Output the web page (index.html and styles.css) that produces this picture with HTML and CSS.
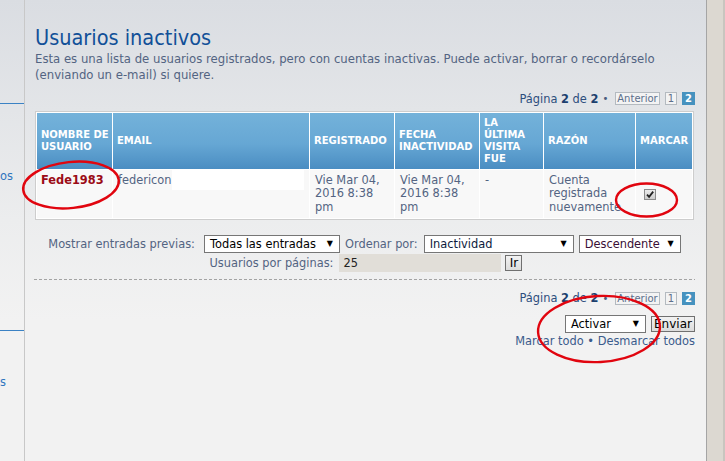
FILE: index.html
```html
<!DOCTYPE html>
<html lang="es">
<head>
<meta charset="utf-8">
<title>Usuarios inactivos</title>
<link rel="stylesheet" href="styles.css">
</head>
<body>
<div class="page">
  <aside class="side">
    <div class="side-rule side-rule-1"></div>
    <a class="side-link side-link-1">os</a>
    <div class="side-rule side-rule-2"></div>
    <a class="side-link side-link-2">s</a>
  </aside>
  <main class="main">
    <h1 class="title">Usuarios inactivos</h1>
    <p class="desc">Esta es una lista de usuarios registrados, pero con cuentas inactivas. Puede activar, borrar o recordárselo<br>(enviando un e-mail) si quiere.</p>
    <div class="pagination pagination-top">
      <span class="pag-label">Página <strong>2</strong> de <strong>2</strong></span>
      <span class="pag-bullet">•</span>
      <span class="pag-btn pag-prev">Anterior</span>
      <span class="pag-btn">1</span>
      <span class="pag-btn pag-current">2</span>
    </div>
    <table class="users">
      <colgroup>
        <col class="c-name"><col class="c-email"><col class="c-reg"><col class="c-inact"><col class="c-visit"><col class="c-reason"><col class="c-mark">
      </colgroup>
      <thead>
        <tr>
          <th>Nombre de usuario</th>
          <th>Email</th>
          <th>Registrado</th>
          <th>Fecha inactividad</th>
          <th>La última visita fue</th>
          <th>Razón</th>
          <th>Marcar</th>
        </tr>
      </thead>
      <tbody>
        <tr>
          <td class="cell-name"><span class="username">Fede1983</span></td>
          <td class="cell-email"><div class="email-wrap"><span class="email-text">federicon</span><span class="email-blank"></span></div></td>
          <td>Vie Mar 04, 2016 8:38 pm</td>
          <td>Vie Mar 04, 2016 8:38 pm</td>
          <td>-</td>
          <td>Cuenta registrada nuevamente</td>
          <td class="cell-mark"><span class="checkbox"><svg class="check" viewBox="0 0 10 9" width="10" height="9"><path d="M2 4.6 L4.1 6.8 L8.2 1.6" /></svg></span></td>
        </tr>
      </tbody>
    </table>
    <div class="options">
      <div class="opt-row">
        <span class="opt-label">Mostrar entradas previas:</span>
        <span class="select w-entries gap-9"><span>Todas las entradas</span><span class="arrow">▼</span></span>
        <span class="opt-label gap-5">Ordenar por:</span>
        <span class="select w-order gap-6 txt-navy"><span>Inactividad</span><span class="arrow">▼</span></span>
        <span class="select w-dir gap-5 txt-plum"><span>Descendente</span><span class="arrow">▼</span></span>
      </div>
      <div class="opt-row opt-row-2">
        <span class="opt-label">Usuarios por páginas:</span>
        <span class="text-input gap-6">25</span>
        <span class="button w-go gap-4">Ir</span>
      </div>
    </div>
    <div class="dashed"></div>
    <div class="pagination pagination-bottom">
      <span class="pag-label">Página <strong>2</strong> de <strong>2</strong></span>
      <span class="pag-bullet">•</span>
      <span class="pag-btn pag-prev">Anterior</span>
      <span class="pag-btn">1</span>
      <span class="pag-btn pag-current">2</span>
    </div>
    <div class="actions">
      <span class="select w-action"><span>Activar</span><span class="arrow">▼</span></span>
      <span class="button w-send gap-5">Enviar</span>
    </div>
    <div class="marks"><a>Marcar todo</a> • <a>Desmarcar todos</a></div>
  </main>
  <div class="scrollbar"></div>
</div>
<svg class="annotations" width="725" height="461" viewBox="0 0 725 461">
  <ellipse cx="71" cy="185" rx="48" ry="23" transform="rotate(-6 71 185)"></ellipse>
  <ellipse cx="646.5" cy="200" rx="30.5" ry="16.5"></ellipse>
  <ellipse cx="599" cy="329" rx="61" ry="33" transform="rotate(-3 599 329)"></ellipse>
</svg>
</body>
</html>
```
FILE: styles.css
```css
* { box-sizing: border-box; }
html, body { margin: 0; padding: 0; }
body {
  width: 725px;
  height: 461px;
  overflow: hidden;
  position: relative;
  font-family: "DejaVu Sans", Verdana, sans-serif;
  font-size: 11.4px;
  color: #536482;
  background: linear-gradient(to bottom, #dadde2 0px, #e3e5e8 110px, #ecedee 220px, #f2f2f2 320px, #f2f2f2 100%);
}
.page { display: flex; height: 461px; }

/* left navigation fragment */
.side {
  flex: none;
  width: 25px;
  border-right: 1px solid #c8c8c8;
  display: flex;
  flex-direction: column;
  overflow: hidden;
}
.side-rule { height: 1px; background: #3b82c4; flex: none; }
.side-rule-1 { margin-top: 103px; }
.side-rule-2 { margin-top: 147px; }
.side-link { display: block; line-height: 13px; color: #2f75bf; white-space: nowrap; }
.side-link-1 { margin-top: 66px; }
.side-link-2 { margin-top: 45px; }

/* main column */
.main { flex: 1; min-width: 0; padding: 0 11px 0 9px; }
.title {
  margin: 25px 0 0 1px;
  font-family: "DejaVu Sans Condensed", "DejaVu Sans", sans-serif;
  font-stretch: condensed;
  font-weight: normal;
  font-size: 21.5px;
  line-height: 26px;
  color: #115098;
}
.desc { margin: 0 0 0 1px; line-height: 16px; font-size: 11.7px; white-space: nowrap; }

/* pagination */
.pagination {
  display: flex;
  justify-content: flex-end;
  align-items: center;
  height: 15px;
  color: #2d4e7d;
}
.pagination-top { margin-top: 8px; }
.pagination-bottom { margin-top: 11px; }
.pag-label strong { color: #1c3f6e; }
.pag-bullet { margin: 0 2px 0 4px; font-size: 10px; color: #4a5d7c; }
.pag-btn {
  height: 13px;
  line-height: 11px;
  border: 1px solid #b4bac0;
  padding: 0 2px;
  margin-left: 5px;
  font-size: 10px;
  color: #5c6f8c;
  background: #f3f3f3;
}
.pag-prev { padding: 0 1px; }
.pag-current {
  background: #4692bf;
  border-color: #4692bf;
  color: #fff;
  font-weight: bold;
}

/* table */
.users {
  width: 659px;
  margin: 5px 1px 0;
  table-layout: fixed;
  border-collapse: separate;
  border-spacing: 1px;
  border: 1px solid #cdcdcd;
  background: #fff;
}
.c-name { width: 75px; }
.c-email { width: 196px; }
.c-reg { width: 84px; }
.c-inact { width: 84px; }
.c-visit { width: 63px; }
.c-reason { width: 91px; }
.c-mark { width: 56px; }
.users th {
  height: 56px;
  padding: 4px 1px 4px 4px;
  background: linear-gradient(to bottom, #74b2da 0%, #66a7d4 55%, #4a8dc2 100%);
  color: #fff;
  font-size: 10px;
  font-weight: bold;
  line-height: 12px;
  text-transform: uppercase;
  text-align: left;
  vertical-align: middle;
}
.users td {
  padding: 4px 5px 4px;
  background: #f8f8f8;
  vertical-align: top;
  line-height: 13.3px;
  color: #536482;
}
.users td.cell-name { padding-left: 4px; }
.username { color: #9b0b16; font-weight: bold; }
.users td.cell-email { padding: 0 5px; }
.email-wrap { display: flex; align-items: flex-start; }
.email-text { padding-top: 4px; }
.email-blank { flex: 1; height: 20px; background: #fff; }
.users td.cell-mark { vertical-align: middle; padding-left: 8px; }
.checkbox {
  display: inline-block;
  width: 12px;
  height: 11px;
  border: 1px solid #8c8c8c;
  background: linear-gradient(to bottom, #ececec, #cdcdcd);
  vertical-align: middle;
  position: relative;
  top: 1px;
}
.check { display: block; }
.check path { fill: none; stroke: #222; stroke-width: 1.8; }

/* options */
.options { margin-top: 15px; display: flex; flex-direction: column; gap: 1px; }
.opt-row { display: flex; justify-content: center; align-items: center; height: 18px; }
.opt-row-2 { padding-left: 3px; }
.opt-label { color: #536482; white-space: nowrap; }
.gap-4 { margin-left: 4px; }
.gap-5 { margin-left: 5px; }
.gap-6 { margin-left: 6px; }
.gap-9 { margin-left: 9px; }
.select {
  display: flex;
  align-items: center;
  justify-content: space-between;
  height: 18px;
  border: 1px solid #767676;
  background: #fff;
  color: #000;
  padding: 0 6px 0 5px;
  white-space: nowrap;
}
.txt-navy { color: #0d1a3c; }
.txt-plum { color: #3a0f36; }
.arrow { font-size: 8px; color: #000; }
.w-entries { width: 136px; }
.w-order { width: 150px; }
.w-dir { width: 102px; }
.w-action { width: 81px; }
.text-input {
  width: 162px;
  height: 18px;
  line-height: 18px;
  padding-left: 4px;
  background: #e1ded8;
  color: #222;
}
.button {
  height: 16px;
  line-height: 14px;
  border: 1px solid #707070;
  background: linear-gradient(to bottom, #f2f2f2, #dcdcdc);
  color: #000;
  font-size: 12px;
  text-align: center;
}
.w-go { width: 17px; }
.w-send { width: 44px; }

.dashed {
  height: 1px;
  margin-top: 7px;
  background: repeating-linear-gradient(to right, #a3a3a3 0 3px, transparent 3px 5px);
}
.actions {
  display: flex;
  justify-content: flex-end;
  align-items: center;
  height: 18px;
  margin-top: 9px;
}
.marks { text-align: right; margin-top: 1px; line-height: 14px; color: #3b5b8c; }

/* right frame strip */
.scrollbar {
  flex: none;
  width: 19px;
  border-left: 1px solid #a5a5a5;
  border-right: 2px solid #c9c5bf;
  background: #dcd8d1;
}

/* red hand-drawn annotations */
.annotations { position: absolute; left: 0; top: 0; pointer-events: none; }
.annotations ellipse { fill: none; stroke: #e1050f; stroke-width: 2.4; }
```
